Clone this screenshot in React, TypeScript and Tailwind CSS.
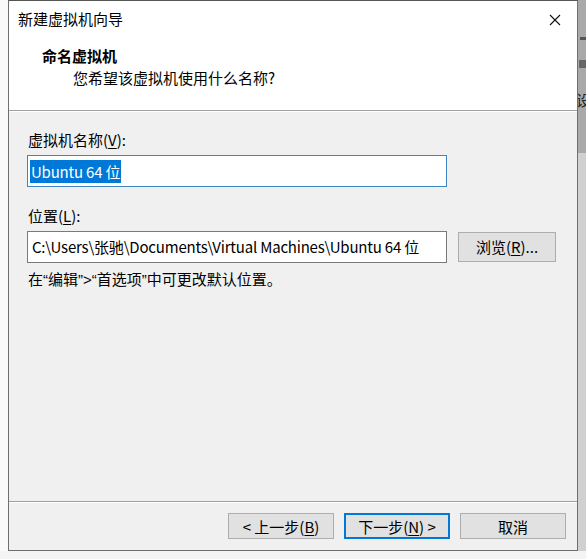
import React from 'react';

const FONT = { fontFamily: '"Noto Sans CJK SC", "Noto Sans", sans-serif' };
const LATIN = { fontFamily: '"Liberation Sans", "Noto Sans CJK SC", sans-serif' };

const WinButton = ({ children, primary = false }: { children: React.ReactNode; primary?: boolean }) => (
  <button
    className={`h-[26px] w-[106px] flex items-center justify-center bg-[#e1e1e1] text-[15px] text-black leading-none ${
      primary ? 'border-2 border-[#0078d7]' : 'border border-[#adadad]'
    }`}
  >
    {children}
  </button>
);

export default function App() {
  return (
    <div className="w-[586px] h-[559px] flex flex-col bg-[#f7f7f7] overflow-hidden" style={FONT}>
      <div className="flex h-[551px]">
        {/* left edge */}
        <div className="w-[8px] bg-[#fafafa]" />

        {/* dialog */}
        <div className="w-[570px] flex flex-col border border-[#6f6f6f] border-t-[#555] bg-[#f0f0f0]">
          {/* title + header */}
          <div className="bg-white h-[109px] flex flex-col">
            <div className="h-[37px] flex items-center justify-between pl-[9px] pr-[16px]">
              <span className="text-[15px] text-black">新建虚拟机向导</span>
              <svg width="12" height="12" viewBox="0 0 12 12">
                <path d="M1 1 L11 11 M11 1 L1 11" stroke="#111" strokeWidth="1.1" fill="none" />
              </svg>
            </div>
            <div className="pl-[33px] mt-[7px] flex flex-col">
              <span className="text-[15px] font-bold leading-[22px] text-black">命名虚拟机</span>
              <span className="pl-[31px] text-[15px] leading-[22px] text-black">您希望该虚拟机使用什么名称?</span>
            </div>
          </div>
          <div className="h-px bg-[#a0a0a0]" />
          <div className="h-px bg-white" />

          {/* body */}
          <div className="flex-1 flex flex-col px-[18px]">
            <div className="mt-[18px] text-[15px] leading-[20px] text-black pl-px">
              虚拟机名称(<u className="underline-offset-2">V</u>):
            </div>
            <div className="mt-[5px] w-[420px] h-[32px] border border-[#3d85c6] bg-white flex items-center px-[2px]">
              <span className="bg-[#0078d7] text-white text-[15px] leading-[23px] px-[1px] tracking-[-0.2px]">Ubuntu 64 位</span>
            </div>

            <div className="mt-[19px] text-[15px] leading-[20px] text-black pl-px">
              位置(<u className="underline-offset-2">L</u>):
            </div>
            <div className="mt-[5px] flex items-center gap-[11px]">
              <div className="w-[420px] h-[32px] border border-[#7a7a7a] bg-white flex items-center px-[4px]">
                <span className="text-[15px] text-black whitespace-nowrap tracking-[-0.2px]">
                  C:\Users\张驰\Documents\Virtual Machines\Ubuntu 64 位
                </span>
              </div>
              <button className="w-[98px] h-[30px] bg-[#e1e1e1] border border-[#adadad] text-[15px] text-black flex items-center justify-center">
                浏览(<u className="underline-offset-2">R</u>)...
              </button>
            </div>
            <div className="mt-[6px] text-[15px] leading-[20px] text-black pl-px">
              在<span style={LATIN}>“</span>编辑<span style={LATIN}>”&gt;“</span>首选项<span style={LATIN}>”</span>中可更改默认位置。
            </div>
          </div>

          {/* footer */}
          <div className="h-px bg-[#a0a0a0]" />
          <div className="h-px bg-white" />
          <div className="h-[47px] flex items-start justify-end gap-[10px] pr-[11px] pt-[10px]">
            <WinButton>
              &lt; 上一步(<u className="underline-offset-2">B</u>)
            </WinButton>
            <WinButton primary>
              下一步(<u className="underline-offset-2">N</u>) &gt;
            </WinButton>
            <WinButton>取消</WinButton>
          </div>
        </div>

        {/* right edge: window behind */}
        <div className="w-[8px] flex flex-col overflow-hidden">
          <div className="h-[153px] bg-[#a9a9a9] relative">
            <div className="absolute left-[2px] top-[37px] w-[6px] h-[3px] bg-[#555]" />
            <div className="absolute left-[1px] top-[60px] w-[7px] h-[8px] bg-[#666]" />
            <span className="absolute left-[-2px] top-[92px] text-[15px] leading-none text-[#222]">设</span>
          </div>
          <div className="flex-1 bg-[#d0d0d0]" />
        </div>
      </div>
      <div className="flex-1 bg-[#f4f4f4]" />
    </div>
  );
}
